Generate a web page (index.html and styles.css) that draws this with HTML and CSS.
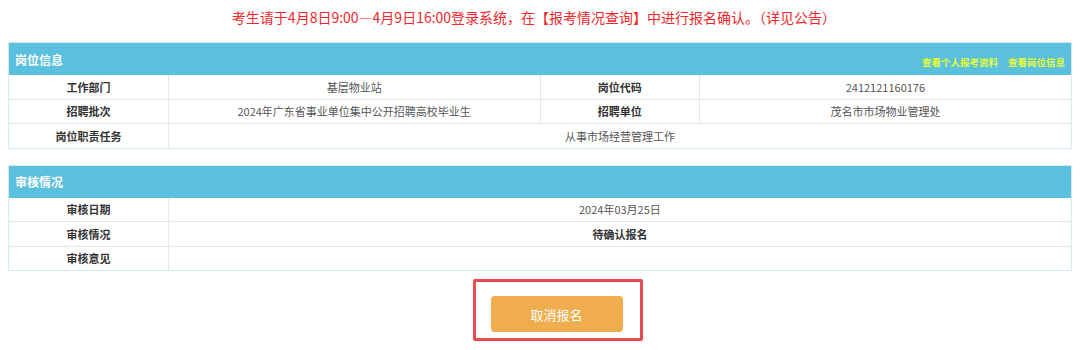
FILE: index.html
```html
<!DOCTYPE html>
<html lang="zh-CN">
<head>
  <meta charset="UTF-8">
  <title>报考情况查询</title>
  <link rel="stylesheet" href="styles.css">
</head>
<body>

  <p class="notice">考生请于4月8日9:00—4月9日16:00登录系统，在【报考情况查询】中进行报名确认。（详见公告）</p>

  <div class="panel">
    <div class="panel-heading">
      <span class="panel-title">岗位信息</span>
      <span class="links">
        <a href="#">查看个人报考资料</a>
        <a href="#">查看岗位信息</a>
      </span>
    </div>
    <table class="info">
      <colgroup>
        <col class="c-label"><col class="c-value"><col class="c-label"><col class="c-value">
      </colgroup>
      <tr>
        <th>工作部门</th>
        <td>基层物业站</td>
        <th>岗位代码</th>
        <td>2412121160176</td>
      </tr>
      <tr>
        <th>招聘批次</th>
        <td>2024年广东省事业单位集中公开招聘高校毕业生</td>
        <th>招聘单位</th>
        <td>茂名市市场物业管理处</td>
      </tr>
      <tr>
        <th>岗位职责任务</th>
        <td colspan="3">从事市场经营管理工作</td>
      </tr>
    </table>
  </div>

  <div class="panel">
    <div class="panel-heading">
      <span class="panel-title">审核情况</span>
    </div>
    <table class="info">
      <colgroup>
        <col class="c-label"><col>
      </colgroup>
      <tr>
        <th>审核日期</th>
        <td>2024年03月25日</td>
      </tr>
      <tr>
        <th>审核情况</th>
        <td class="strong">待确认报名</td>
      </tr>
      <tr>
        <th>审核意见</th>
        <td></td>
      </tr>
    </table>
  </div>

  <div class="actions">
    <div class="mark">
      <button class="btn-cancel">取消报名</button>
    </div>
  </div>

</body>
</html>
```

FILE: styles.css
```css
body {
  font-family: "Noto Sans CJK SC", "Noto Sans", sans-serif;
  background: #fff;
  color: #333;
  margin: 0;
  padding: 0 8px;
}

.notice {
  margin: 0;
  height: 42px;
  line-height: 34px;
  padding-right: 12px;
  text-align: center;
  font-size: 14px;
  color: #f2262a;
}

.panel {
  border: 1px solid #d6eaf2;
}

.panel + .panel {
  margin-top: 16px;
}

.panel-heading {
  display: flex;
  justify-content: space-between;
  align-items: center;
  height: 32px;
  padding: 0 6px;
  background: #5bc0de;
  color: #fff;
}

.panel-title {
  font-size: 12px;
  font-weight: bold;
}

.links {
  display: flex;
  gap: 10px;
  padding-top: 6px;
}

.links a {
  font-size: 9.5px;
  font-weight: bold;
  color: #e8ff2e;
  text-decoration: none;
}

.info {
  width: 100%;
  border-collapse: collapse;
  table-layout: fixed;
  font-size: 11px;
}

.c-label {
  width: 15%;
}

.info th,
.info td {
  height: 23.5px;
  padding: 0 4px;
  border: 1px solid #e6e6e6;
  text-align: center;
  font-weight: normal;
  color: #555;
}

.info tr:first-child th,
.info tr:first-child td {
  border-top: none;
}

.info th:first-child {
  border-left: none;
}

.info td:last-child {
  border-right: none;
}

.info tr:last-child th,
.info tr:last-child td {
  border-bottom: none;
}

.info th,
.info td.strong {
  font-weight: bold;
  color: #333;
}

.actions {
  display: flex;
  justify-content: center;
  padding: 0 0 0 35px;
  margin-top: 8px;
}

.mark {
  border: 3px solid #ea4b50;
  border-radius: 2px;
  padding: 14px 17px 6px 15px;
}

.btn-cancel {
  display: block;
  width: 132px;
  height: 36px;
  border: none;
  border-radius: 4px;
  background: #f0ad4e;
  color: #fff;
  font-family: inherit;
  font-size: 13px;
  cursor: pointer;
}
```
